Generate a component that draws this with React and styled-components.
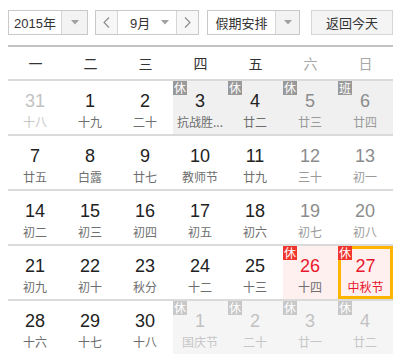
import React from "react";
import styled, { createGlobalStyle, css } from "styled-components";

const Global = createGlobalStyle`
  html, body { margin: 0; padding: 0; background: #fff; }
  body { font-family: "Liberation Sans", "Noto Sans CJK SC", sans-serif; color: #333; }
`;

const Page = styled.div`
  width: 385px;
  padding: 10px 0 0 8px;
`;

const Toolbar = styled.div`
  display: flex;
  align-items: stretch;
  height: 25px;
`;

const Box = styled.div`
  display: flex;
  height: 25px;
  box-sizing: border-box;
  border: 1px solid #c9c9c9;
  margin-left: ${(p) => p.$ml || 0}px;
  width: ${(p) => p.$w}px;
  background: #fff;
`;

const Label = styled.div`
  flex: 1;
  display: flex;
  align-items: center;
  justify-content: center;
  font-size: 13px;
  color: #333;
  font-family: "Liberation Sans", "Noto Sans CJK SC", sans-serif;
`;

const ArrowCell = styled.div`
  width: ${(p) => p.$w || 23}px;
  display: flex;
  align-items: center;
  justify-content: center;
  border-left: 1px solid #d6d6d6;
  background: #f3f3f3;
`;

const NavBtn = styled.div`
  width: 21px;
  display: flex;
  align-items: center;
  justify-content: center;
  background: #f7f7f7;
  ${(p) => (p.$side === "left" ? "border-right: 1px solid #d6d6d6;" : "border-left: 1px solid #d6d6d6;")}
`;

const MonthMid = styled.div`
  flex: 1;
  display: flex;
  align-items: center;
  padding-left: 12px;
  padding-right: 7px;
  font-size: 13px;
  color: #333;
  justify-content: space-between;
`;

const TodayBtn = styled.div`
  margin-left: 11px;
  width: 82px;
  height: 25px;
  box-sizing: border-box;
  border: 1px solid #d6d6d6;
  background: #f4f4f4;
  display: flex;
  align-items: center;
  justify-content: center;
  font-size: 13px;
  color: #333;
`;

const Caret = () => (
  <svg width="8" height="5" viewBox="0 0 8 5">
    <path d="M0 0 H8 L4 4.5 Z" fill="#a0a0a0" />
  </svg>
);

const Chevron = ({ dir }) => (
  <svg width="7" height="11" viewBox="0 0 7 11">
    <path
      d={dir === "left" ? "M6 0.5 L1 5.5 L6 10.5" : "M1 0.5 L6 5.5 L1 10.5"}
      fill="none"
      stroke="#8a8a8a"
      strokeWidth="1.1"
    />
  </svg>
);

const WeekHead = styled.div`
  margin-top: 10px;
  border-top: 2px solid #c2c2c2;
  display: grid;
  grid-template-columns: repeat(7, 55px);
  height: 32px;
`;

const WeekDay = styled.div`
  display: flex;
  align-items: center;
  justify-content: center;
  font-family: "Noto Sans CJK SC", sans-serif;
  font-size: 14px;
  color: ${(p) => (p.$weekend ? "#a8a8a8" : "#333")};
`;

const Row = styled.div`
  display: grid;
  grid-template-columns: repeat(7, 55px);
  border-top: 2px solid #dadada;
`;

const Cell = styled.div`
  position: relative;
  height: 53px;
  box-sizing: border-box;
  display: flex;
  flex-direction: column;
  align-items: center;
  padding-top: 10px;
  border-right: 1px solid transparent;
  background-clip: padding-box;
  background: ${(p) => p.$bg || "transparent"};
  ${(p) =>
    p.$selected &&
    css`
      border-right: none;
      box-shadow: inset 0 0 0 3px #ffb400;
    `}
`;

const Num = styled.div`
  font-family: "Liberation Sans", Arial, sans-serif;
  font-size: 18px;
  line-height: 21px;
  color: ${(p) => p.$color};
`;

const Lunar = styled.div`
  margin-top: 2px;
  font-family: "Noto Sans CJK SC", sans-serif;
  font-size: 12px;
  line-height: 16px;
  white-space: nowrap;
  color: ${(p) => p.$color};
`;

const Tag = styled.span`
  position: absolute;
  top: 0;
  left: 0;
  width: 14px;
  height: 14px;
  font-family: "Noto Sans CJK SC", sans-serif;
  font-size: 12px;
  line-height: 14px;
  text-align: center;
  color: #fff;
  background: ${(p) => p.$bg};
`;

const rows = [
  [
    { d: 31, l: "十八", other: true },
    { d: 1, l: "十九" },
    { d: 2, l: "二十" },
    { d: 3, l: "抗战胜...", tag: "休", holi: true },
    { d: 4, l: "廿二", tag: "休", holi: true },
    { d: 5, l: "廿三", tag: "休", holi: true, we: true },
    { d: 6, l: "廿四", tag: "班", holi: true, we: true },
  ],
  [
    { d: 7, l: "廿五" },
    { d: 8, l: "白露" },
    { d: 9, l: "廿七" },
    { d: 10, l: "教师节" },
    { d: 11, l: "廿九" },
    { d: 12, l: "三十", we: true },
    { d: 13, l: "初一", we: true },
  ],
  [
    { d: 14, l: "初二" },
    { d: 15, l: "初三" },
    { d: 16, l: "初四" },
    { d: 17, l: "初五" },
    { d: 18, l: "初六" },
    { d: 19, l: "初七", we: true },
    { d: 20, l: "初八", we: true },
  ],
  [
    { d: 21, l: "初九" },
    { d: 22, l: "初十" },
    { d: 23, l: "秋分" },
    { d: 24, l: "十二" },
    { d: 25, l: "十三" },
    { d: 26, l: "十四", tag: "休", red: true },
    { d: 27, l: "中秋节", tag: "休", red: true, sel: true, fest: true },
  ],
  [
    { d: 28, l: "十六" },
    { d: 29, l: "十七" },
    { d: 30, l: "十八" },
    { d: 1, l: "国庆节", tag: "休", other: true, holi: true },
    { d: 2, l: "二十", tag: "休", other: true, holi: true },
    { d: 3, l: "廿一", tag: "休", other: true, holi: true },
    { d: 4, l: "廿二", tag: "休", other: true, holi: true },
  ],
];

function cellStyle(c) {
  let num = "#222";
  let lun = "#6e6e6e";
  let bg;
  let tagBg = "#999";
  if (c.we) {
    num = "#8c8c8c";
    lun = "#9a9a9a";
  }
  if (c.other) {
    num = "#c2c2c2";
    lun = "#c6c6c6";
    tagBg = "#c8c8c8";
  }
  if (c.holi) bg = c.other ? "#f5f5f5" : "#f0f0f0";
  if (c.red) {
    bg = "#fff0f0";
    num = "#e8192c";
    tagBg = "#f0352d";
    if (c.fest) lun = "#e8192c";
  }
  return { num, lun, bg, tagBg };
}

const weekdays = ["一", "二", "三", "四", "五", "六", "日"];

export default function App() {
  return (
    <>
      <Global />
      <Page>
        <Toolbar>
          <Box $w={80}>
            <Label>2015年</Label>
            <ArrowCell $w={25}>
              <Caret />
            </ArrowCell>
          </Box>
          <Box $w={104} $ml={7}>
            <NavBtn $side="left">
              <Chevron dir="left" />
            </NavBtn>
            <MonthMid>
              <span>9月</span>
              <Caret />
            </MonthMid>
            <NavBtn $side="right">
              <Chevron dir="right" />
            </NavBtn>
          </Box>
          <Box $w={93} $ml={8}>
            <Label>假期安排</Label>
            <ArrowCell $w={23}>
              <Caret />
            </ArrowCell>
          </Box>
          <TodayBtn>返回今天</TodayBtn>
        </Toolbar>
        <WeekHead>
          {weekdays.map((w, i) => (
            <WeekDay key={w} $weekend={i >= 5}>
              {w}
            </WeekDay>
          ))}
        </WeekHead>
        {rows.map((r, ri) => (
          <Row key={ri}>
            {r.map((c, ci) => {
              const s = cellStyle(c);
              return (
                <Cell key={ci} $bg={s.bg} $selected={c.sel}>
                  {c.tag && <Tag $bg={s.tagBg}>{c.tag}</Tag>}
                  <Num $color={s.num}>{c.d}</Num>
                  <Lunar $color={s.lun}>{c.l}</Lunar>
                </Cell>
              );
            })}
          </Row>
        ))}
      </Page>
    </>
  );
}
